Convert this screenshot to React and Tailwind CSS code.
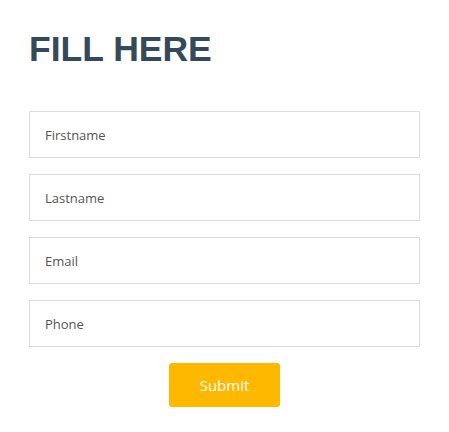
export default function App() {
  const fields = ["Firstname", "Lastname", "Email", "Phone"];
  return (
    <div className="min-h-screen bg-white px-[29px] pt-[27px]" style={{ fontFamily: '"Open Sans", sans-serif' }}>
      <h1 className="font-['Liberation_Sans',Arial,sans-serif] text-[35.5px] font-bold leading-[44px] text-[#344a5a]">
        FILL HERE
      </h1>
      <form className="mt-[40px] flex w-[391px] flex-col gap-[16px]">
        {fields.map((f) => (
          <input
            key={f}
            placeholder={f}
            className="h-[47px] w-full border border-[#dddddd] px-[15px] text-[13px] text-[#333] outline-none placeholder:text-[#555]"
          />
        ))}
        <div className="flex justify-center">
          <button
            type="button"
            className="h-[44px] w-[111px] rounded-[3px] bg-[#ffb800] text-[15px] text-white"
          >
            Submit
          </button>
        </div>
      </form>
    </div>
  );
}
